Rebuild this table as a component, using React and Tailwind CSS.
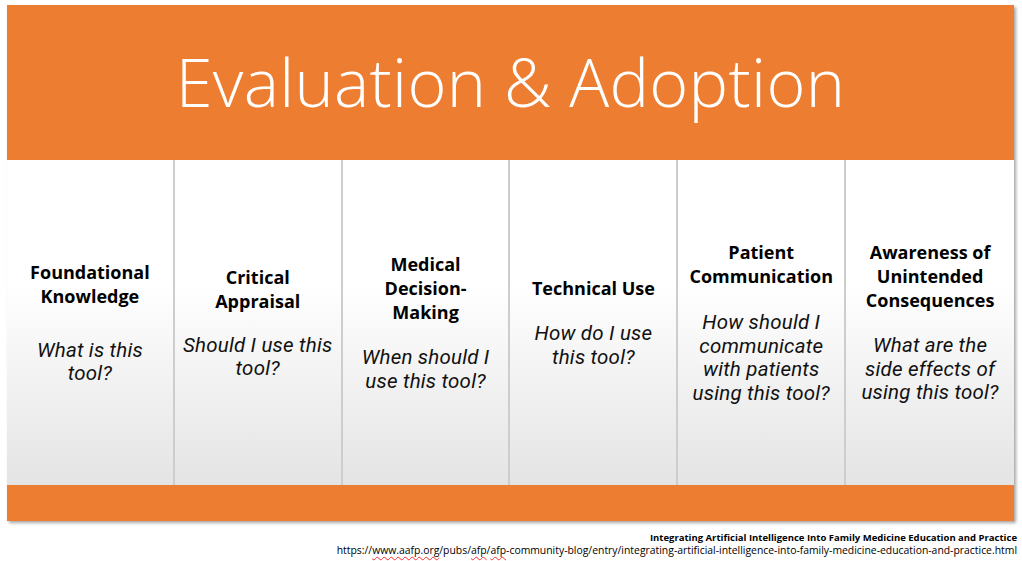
import React from "react";

const cols = [
  { h: ["Foundational", "Knowledge"], q: ["What is this", "tool?"], gap: "mt-[31px]" },
  { h: ["Critical", "Appraisal"], q: ["Should I use this", "tool?"], gap: "mt-[21px]" },
  { h: ["Medical", "Decision-", "Making"], q: ["When should I", "use this tool?"], gap: "mt-[22px]" },
  { h: ["Technical Use"], q: ["How do I use", "this tool?"], gap: "mt-[22px]" },
  { h: ["Patient", "Communication"], q: ["How should I", "communicate", "with patients", "using this tool?"], gap: "mt-[23px]" },
  { h: ["Awareness of", "Unintended", "Consequences"], q: ["What are the", "side effects of", "using this tool?"], gap: "mt-[22px]" },
];

function Lines({ items }) {
  return items.map((t, j) => (
    <React.Fragment key={j}>
      {j > 0 && <br />}
      {t}
    </React.Fragment>
  ));
}

export default function App() {
  const sq = "underline decoration-wavy decoration-red-500 decoration-[0.5px] underline-offset-2";
  return (
    <div className="w-[1022px] h-[561px] bg-white overflow-hidden" style={{ fontFamily: '"Open Sans", sans-serif' }}>
      <div className="ml-[7px] mt-[5px] w-[1007px] shadow-[2px_2px_3px_rgba(0,0,0,0.35)]">
        <div className="h-[155px] bg-[#ED7D31] flex items-center justify-center">
          <h1 className="text-white text-[66.5px] font-light leading-none pb-[2px] tracking-[0.3px]">Evaluation &amp; Adoption</h1>
        </div>
        <div className="grid grid-cols-6 h-[325px]">
          {cols.map((c, i) => (
            <div
              key={i}
              className={`flex flex-col items-center justify-center text-center text-black bg-linear-to-b from-white from-[38%] to-[#e4e4e4] ${i < 5 ? "border-r-2 border-[#cdcdcd]" : ""}`}
            >
              <p className="font-bold text-[18px] leading-[24px]">
                <Lines items={c.h} />
              </p>
              <p
                className={`italic font-normal text-[20.5px] leading-[23.5px] text-[#111] tracking-[0.2px] ${c.gap}`}
                style={{ fontFamily: 'Roboto, "Open Sans", sans-serif' }}
              >
                <Lines items={c.q} />
              </p>
            </div>
          ))}
        </div>
        <div className="h-[36px] bg-[#ED7D31]" />
      </div>
      <div className="mt-[10px] pr-[5px] text-right text-black leading-[13px]">
        <div className="font-bold text-[9.5px]">Integrating Artificial Intelligence Into Family Medicine Education and Practice</div>
        <div className="text-[10.4px]">
          https://<span className={sq}>www.aafp.org</span>/pubs/<span className={sq}>afp</span>/<span className={sq}>afp</span>-community-blog/entry/integrating-artificial-intelligence-into-family-medicine-education-and-practice.html
        </div>
      </div>
    </div>
  );
}
